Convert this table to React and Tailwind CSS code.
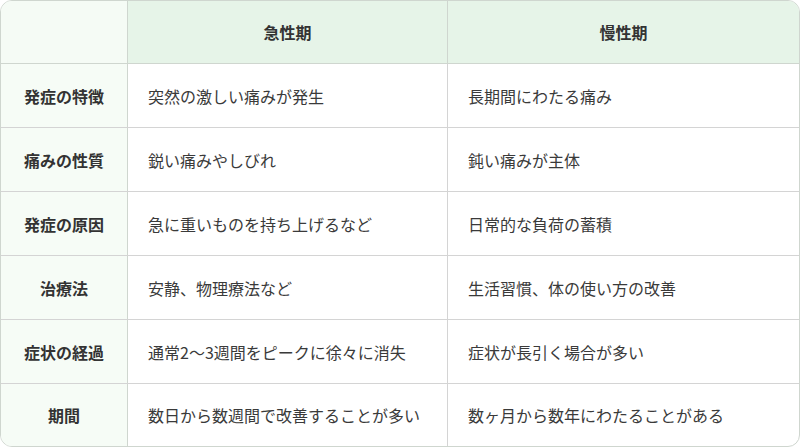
const rows = [
  ['発症の特徴', '突然の激しい痛みが発生', '長期間にわたる痛み'],
  ['痛みの性質', '鋭い痛みやしびれ', '鈍い痛みが主体'],
  ['発症の原因', '急に重いものを持ち上げるなど', '日常的な負荷の蓄積'],
  ['治療法', '安静、物理療法など', '生活習慣、体の使い方の改善'],
  ['症状の経過', '通常2〜3週間をピークに徐々に消失', '症状が長引く場合が多い'],
  ['期間', '数日から数週間で改善することが多い', '数ヶ月から数年にわたることがある'],
];

export default function App() {
  return (
    <div className="w-[800px] h-[448px] bg-white font-['Noto_Sans_CJK_JP','Noto_Sans',sans-serif] text-[16px]">
      <div className="border border-[#cfd6cf] rounded-xl overflow-hidden">
        {/* Header */}
        <div className="grid grid-cols-[127px_320px_1fr] h-[63px] border-b border-[#cfd6cf]">
          <div className="bg-[#f5fbf5] border-r border-[#cfd6cf]" />
          <div className="bg-[#e6f4e8] border-r border-[#cfd6cf] flex items-center justify-center font-bold text-[#333]">
            急性期
          </div>
          <div className="bg-[#e6f4e8] flex items-center justify-center font-bold text-[#333]">
            慢性期
          </div>
        </div>

        {rows.map((r, i) => (
          <div
            key={r[0]}
            className={`grid grid-cols-[127px_320px_1fr] ${i < rows.length - 1 ? 'h-[64px] border-b border-[#d4d4d4]' : 'h-[62px]'}`}
          >
            <div className="bg-[#f6fcf6] border-r border-[#cfd6cf] flex items-center justify-center font-bold text-[#333]">
              {r[0]}
            </div>
            <div className="border-r border-[#d4d4d4] flex items-center pl-5 text-[#3a3a3a]">{r[1]}</div>
            <div className="flex items-center pl-5 text-[#3a3a3a]">{r[2]}</div>
          </div>
        ))}
      </div>
    </div>
  );
}
